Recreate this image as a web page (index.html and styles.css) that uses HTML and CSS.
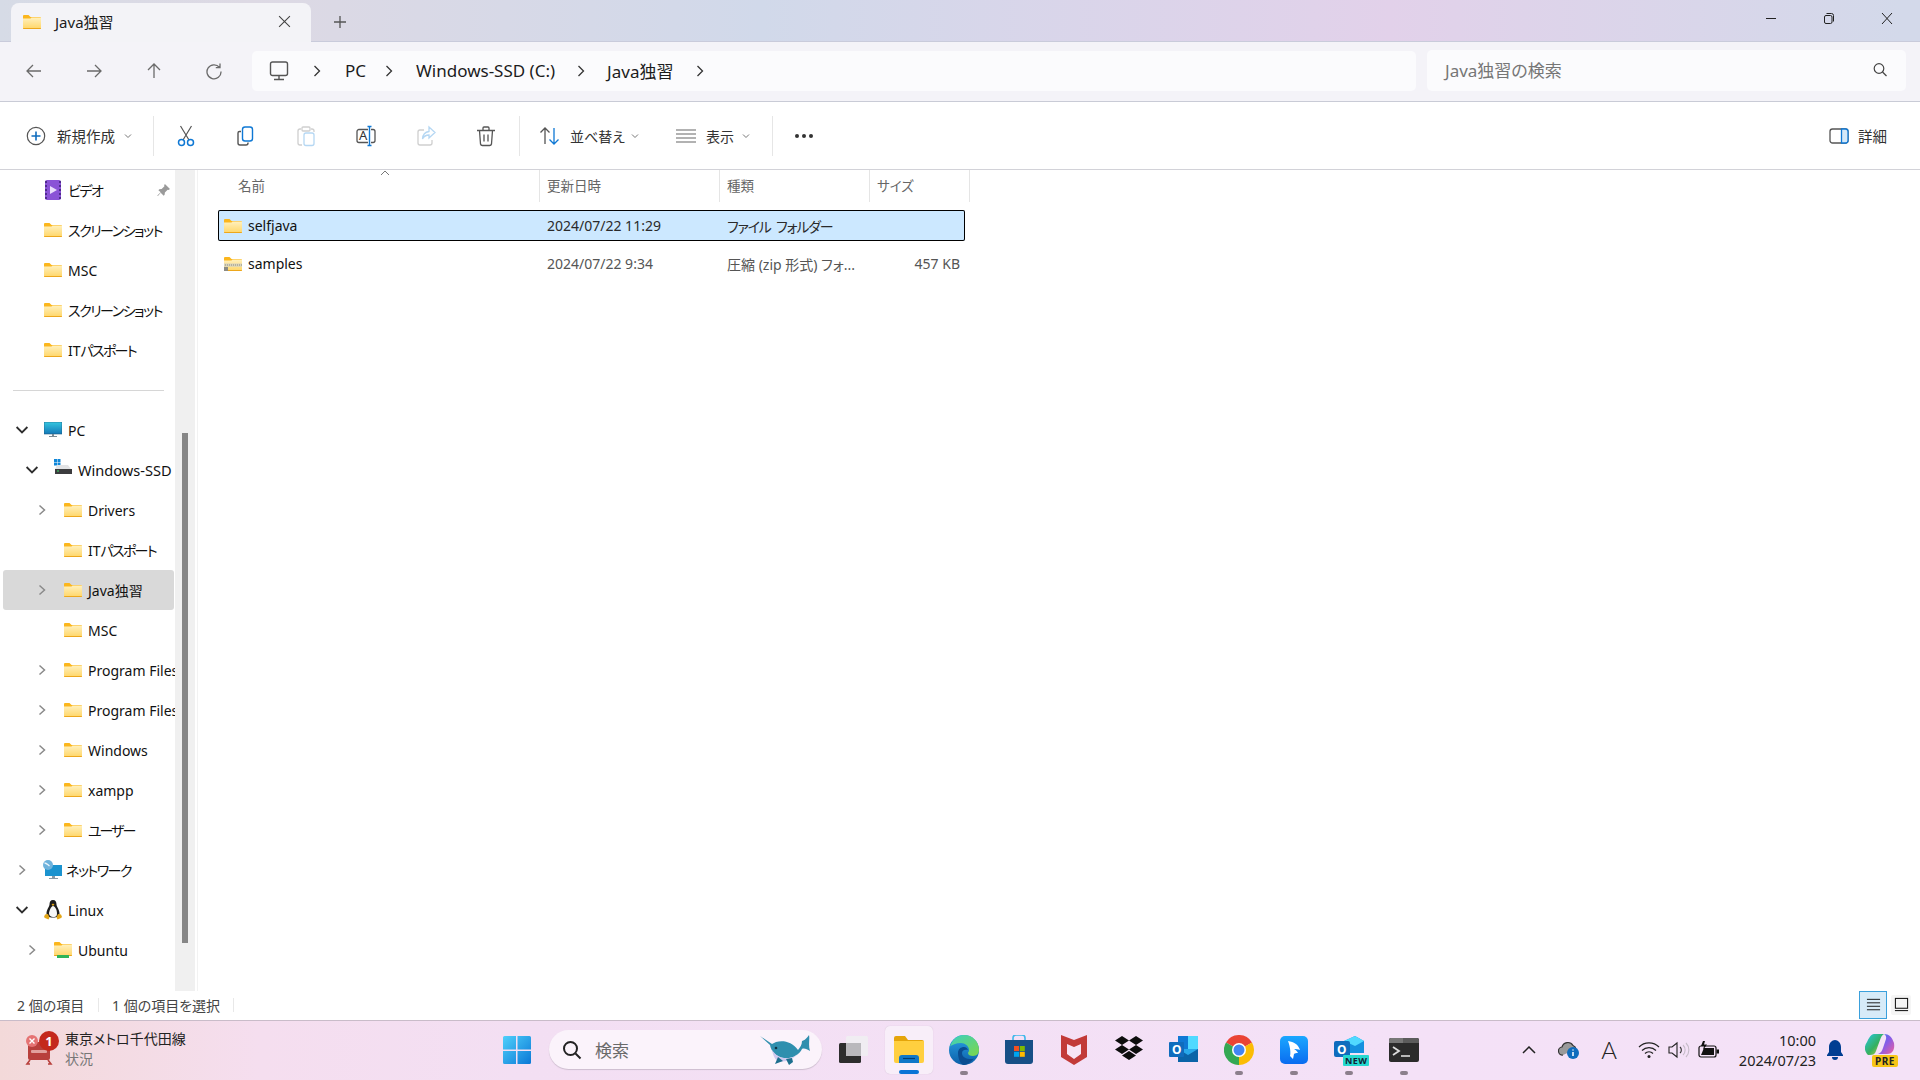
FILE: index.html
```html
<!DOCTYPE html>
<html lang="ja">
<head>
<meta charset="utf-8">
<title>Java独習</title>
<link rel="stylesheet" href="styles.css">
</head>
<body>
<svg class="defs" width="0" height="0" aria-hidden="true">
  <defs>
    <linearGradient id="fg" x1="0" y1="0" x2="0" y2="1"><stop offset="0" stop-color="#fff0bd"/><stop offset="1" stop-color="#ffd667"/></linearGradient>
    <symbol id="folder" viewBox="0 0 18 14">
      <path d="M0 1a1 1 0 0 1 1-1h4.500l2 2H17a1 1 0 0 1 1 1v2H0z" fill="#fbb61d"/>
      <path d="M0 3.600h7.500l1-1H18V13a1 1 0 0 1-1 1H1a1 1 0 0 1-1-1z" fill="url(#fg)"/>
      <path d="M0 13h18v.2a.8.8 0 0 1-.8.8H.8a.8.8 0 0 1-.8-.8z" fill="#eda71c"/>
    </symbol>
    <symbol id="chev-r" viewBox="0 0 10 12"><path d="M2.500 1.500 7.500 6l-5 4.500" fill="none" stroke="#8a8a8a" stroke-width="1.500"/></symbol>
    <symbol id="chev-d" viewBox="0 0 12 10"><path d="M1.500 2.500 6 7l4.500-4.500" fill="none" stroke="#2d2d2d" stroke-width="1.500"/></symbol>
    <symbol id="crumb" viewBox="0 0 10 14"><path d="M2.500 2 7.500 7l-5 5" fill="none" stroke="#333" stroke-width="1.300"/></symbol>
    <symbol id="caret" viewBox="0 0 8 6"><path d="M1 1.500 4 4.500l3-3" fill="none" stroke="#777" stroke-width="1"/></symbol>
  </defs>
</svg>

<div class="screen">
  <header class="titlebar">
    <div class="tab">
      <svg class="folder"><use href="#folder"/></svg>
      <span class="tab-label">Java独習</span>
      <svg class="tab-close" viewBox="0 0 12 12"><path d="M1 1l10 10M11 1 1 11" stroke="#444" stroke-width="1" fill="none"/></svg>
    </div>
    <svg class="tab-new" viewBox="0 0 14 14"><path d="M7 1v12M1 7h12" stroke="#555" stroke-width="1.300" fill="none"/></svg>
    <div class="winctl">
      <svg viewBox="0 0 12 12"><path d="M1 6h10" stroke="#222" stroke-width="1"/></svg>
      <svg viewBox="0 0 12 12"><rect x="1.500" y="3" width="7.500" height="8" rx="1.500" fill="none" stroke="#222"/><path d="M3.500 1h5a2 2 0 0 1 2 2v6" fill="none" stroke="#222"/></svg>
      <svg viewBox="0 0 12 12"><path d="M1 .5l10 11M11 .5 1 11.500" stroke="#222" stroke-width="1" fill="none"/></svg>
    </div>
  </header>

  <div class="addressrow">
    <span class="navbtn"><svg viewBox="0 0 18 18"><path d="M16 9H2M8 3 2 9l6 6" fill="none" stroke="#6a6a6a" stroke-width="1.300"/></svg></span>
    <span class="navbtn"><svg viewBox="0 0 18 18"><path d="M2 9h14M10 3l6 6-6 6" fill="none" stroke="#6a6a6a" stroke-width="1.300"/></svg></span>
    <span class="navbtn"><svg viewBox="0 0 18 18"><path d="M9 16V2M3 8l6-6 6 6" fill="none" stroke="#6a6a6a" stroke-width="1.300"/></svg></span>
    <span class="navbtn"><svg viewBox="0 0 18 18"><path d="M14.500 5.500A7 7 0 1 0 16 9.500M15 1.500v4.200h-4.200" fill="none" stroke="#6a6a6a" stroke-width="1.300"/></svg></span>
    <div class="addressbox">
      <svg class="pc" viewBox="0 0 20 20"><rect x="1.500" y="1" width="17" height="13.500" rx="2" fill="none" stroke="#555" stroke-width="1.400"/><path d="M10 14.500V18M5 18.500h10" stroke="#555" stroke-width="1.400"/></svg>
      <svg class="crumb c1"><use href="#crumb"/></svg>
      <span class="crumb-text">PC</span>
      <svg class="crumb c2"><use href="#crumb"/></svg>
      <span class="crumb-text">Windows-SSD (C:)</span>
      <svg class="crumb c3"><use href="#crumb"/></svg>
      <span class="crumb-text">Java独習</span>
      <svg class="crumb c4"><use href="#crumb"/></svg>
    </div>
    <div class="searchbox">
      <span>Java独習の検索</span>
      <svg viewBox="0 0 16 16"><circle cx="7" cy="6.500" r="4.800" fill="none" stroke="#444" stroke-width="1.200"/><path d="M10.500 10l4 4" stroke="#444" stroke-width="1.200"/></svg>
    </div>
  </div>

  <div class="toolbar">
    <div class="tb-new">
      <svg class="ic20" viewBox="0 0 20 20"><circle cx="10" cy="10" r="8.700" fill="none" stroke="#555" stroke-width="1.200"/><path d="M10 5.500v9M5.500 10h9" stroke="#0f6cbd" stroke-width="1.600"/></svg>
      <span class="tb-text">新規作成</span>
      <svg class="caret"><use href="#caret"/></svg>
    </div>
    <span class="tb-sep"></span>
    <span class="tb-cell"><svg class="ic22" viewBox="0 0 22 22"><path d="M5.500 1l8.500 14M16.500 1 8 15" stroke="#555" stroke-width="1.200" fill="none"/><circle cx="6.500" cy="17.500" r="3" fill="none" stroke="#0f78d4" stroke-width="1.500"/><circle cx="15.500" cy="17.500" r="3" fill="none" stroke="#0f78d4" stroke-width="1.500"/></svg></span>
    <span class="tb-cell"><svg class="ic22" viewBox="0 0 22 22"><path d="M6 6.500H4.500A1.500 1.500 0 0 0 3 8v10a2 2 0 0 0 2 2h6a2 2 0 0 0 2-2v-.5" fill="none" stroke="#555" stroke-width="1.400"/><rect x="7.500" y="2" width="10" height="14" rx="2.500" fill="none" stroke="#0f78d4" stroke-width="1.400"/></svg></span>
    <span class="tb-cell"><svg class="ic22" viewBox="0 0 22 22"><path d="M6 4H5a2 2 0 0 0-2 2v12a2 2 0 0 0 2 2h2M16 4h1a2 2 0 0 1 2 2v1" fill="none" stroke="#cfcfcf" stroke-width="1.300"/><rect x="7" y="2" width="8" height="4" rx="1" fill="none" stroke="#cfcfcf" stroke-width="1.300"/><rect x="9" y="8" width="10" height="12.500" rx="2" fill="none" stroke="#b5d7f3" stroke-width="1.300"/></svg></span>
    <span class="tb-cell"><svg class="ic22" viewBox="0 0 22 22"><path d="M13 4.500H4a2 2 0 0 0-2 2v9a2 2 0 0 0 2 2h9M16 4.500h2a2 2 0 0 1 2 2v9a2 2 0 0 1-2 2h-2" fill="none" stroke="#555" stroke-width="1.300"/><path d="M14.500 2v18M12.500 1.500h4M12.500 20.500h4" stroke="#0f78d4" stroke-width="1.400"/><text x="4" y="15" class="rename-a">A</text></svg></span>
    <span class="tb-cell"><svg class="ic22" viewBox="0 0 22 22"><path d="M9 5H5a2 2 0 0 0-2 2v11a2 2 0 0 0 2 2h10a2 2 0 0 0 2-2v-3" fill="none" stroke="#cfcfcf" stroke-width="1.300"/><path d="M14 2l6 5.500-6 5.500V10c-3 0-5 1-6.500 4 .3-4.500 2.500-7 6.500-7.500z" fill="none" stroke="#b5d7f3" stroke-width="1.300"/></svg></span>
    <span class="tb-cell"><svg class="ic22" viewBox="0 0 22 22"><path d="M2 5.500h18M8 5V3a1 1 0 0 1 1-1h4a1 1 0 0 1 1 1v2M4.500 5.500 5.500 19a2 2 0 0 0 2 1.500h7a2 2 0 0 0 2-1.500l1-13.500" fill="none" stroke="#555" stroke-width="1.300"/><path d="M9 9.500v7M13 9.500v7" stroke="#555" stroke-width="1.300"/></svg></span>
    <span class="tb-sep s2"></span>
    <div class="tb-sort">
      <svg class="ic22" viewBox="0 0 22 22"><path d="M6 19V3M1.500 7.500 6 3l4.500 4.500" fill="none" stroke="#555" stroke-width="1.300"/><path d="M15 3v16M10.500 14.500 15 19l4.500-4.500" fill="none" stroke="#0f78d4" stroke-width="1.300"/></svg>
      <span class="tb-text">並べ替え</span>
      <svg class="caret"><use href="#caret"/></svg>
    </div>
    <div class="tb-view">
      <svg class="ic20" viewBox="0 0 20 20"><path d="M0 4h20M0 8h20M0 12h20M0 16h20" stroke="#666" stroke-width="1.200"/></svg>
      <span class="tb-text">表示</span>
      <svg class="caret"><use href="#caret"/></svg>
    </div>
    <span class="tb-sep s3"></span>
    <span class="tb-more"><i></i><i></i><i></i></span>
    <div class="tb-detail">
      <svg class="ic20" viewBox="0 0 20 20"><rect x="1" y="3" width="18" height="14" rx="2.500" fill="none" stroke="#555" stroke-width="1.300"/><path d="M12.500 3h4a2.500 2.500 0 0 1 2.500 2.500v9a2.500 2.500 0 0 1-2.500 2.500h-4z" fill="#d4e8f8" stroke="#0f78d4" stroke-width="1.300"/></svg>
      <span>詳細</span>
    </div>
  </div>

  <main class="main">
    <nav class="sidebar">
      <div class="tree">
        <div class="row l0"><span class="chev"></span><svg class="ico-video" viewBox="0 0 18 20"><rect width="16" height="20" x="1" rx="2" fill="#8a52d6"/><path d="M1 2h2M1 6h2M1 10h2M1 14h2M1 18h2M15 2h2M15 6h2M15 10h2M15 14h2M15 18h2" stroke="#3d1f75" stroke-width="1.500"/><path d="M6 6l7 4-7 4z" fill="#e9dcfb"/></svg><span class="lbl kana">ビデオ</span><svg class="pin" viewBox="0 0 14 14"><path d="M8.500 0 14 5.500l-1.500 1-1-.3-3 3-.3 2.500-1 1L4 9.500 1 13l-.7-.5L4 9 1.500 6.700l1-1 2.500-.3 3-3-.3-1z" fill="#9a9a9a"/></svg></div>
        <div class="row l0"><span class="chev"></span><svg class="folder"><use href="#folder"/></svg><span class="lbl kana">スクリーンショット</span></div>
        <div class="row l0"><span class="chev"></span><svg class="folder"><use href="#folder"/></svg><span class="lbl">MSC</span></div>
        <div class="row l0"><span class="chev"></span><svg class="folder"><use href="#folder"/></svg><span class="lbl kana">スクリーンショット</span></div>
        <div class="row l0"><span class="chev"></span><svg class="folder"><use href="#folder"/></svg><span class="lbl">IT<span class="kana k-it">パスポート</span></span></div>
        <div class="divider"></div>
        <div class="row l0"><svg class="chev-d"><use href="#chev-d"/></svg><svg class="ico-pc" viewBox="0 0 18 16"><defs><linearGradient id="pcg" x1="0" y1="0" x2="0" y2="1"><stop offset="0" stop-color="#35c7e0"/><stop offset="1" stop-color="#1479b8"/></linearGradient></defs><rect width="18" height="12" fill="url(#pcg)" stroke="#1e5a80" stroke-width=".6"/><path d="M8 12h2v2h3v1H5v-1h3z" fill="#7a8a94"/></svg><span class="lbl">PC</span></div>
        <div class="row l1"><svg class="chev-d"><use href="#chev-d"/></svg><svg class="ico-drive" viewBox="0 0 18 16"><path d="M0 0h3v3H0zM3.500 0h3v3h-3zM0 3.500h3v3H0zM3.500 3.500h3v3h-3z" fill="#0f86d8"/><path d="M1 10 3 6h11l3 4z" fill="#e2e3e5"/><rect x="1" y="10" width="17" height="5" fill="#3c3c3e"/><path d="M3 12h2" stroke="#3ddc6a" stroke-width="1"/></svg><span class="lbl lbl-drive">Windows-SSD (C:)</span></div>
        <div class="row l2"><svg class="chev-r"><use href="#chev-r"/></svg><svg class="folder"><use href="#folder"/></svg><span class="lbl">Drivers</span></div>
        <div class="row l2"><span class="chev"></span><svg class="folder"><use href="#folder"/></svg><span class="lbl">IT<span class="kana k-it">パスポート</span></span></div>
        <div class="row l2 current"><svg class="chev-r"><use href="#chev-r"/></svg><svg class="folder"><use href="#folder"/></svg><span class="lbl">Java独習</span></div>
        <div class="row l2"><span class="chev"></span><svg class="folder"><use href="#folder"/></svg><span class="lbl">MSC</span></div>
        <div class="row l2"><svg class="chev-r"><use href="#chev-r"/></svg><svg class="folder"><use href="#folder"/></svg><span class="lbl">Program Files</span></div>
        <div class="row l2"><svg class="chev-r"><use href="#chev-r"/></svg><svg class="folder"><use href="#folder"/></svg><span class="lbl">Program Files (x86)</span></div>
        <div class="row l2"><svg class="chev-r"><use href="#chev-r"/></svg><svg class="folder"><use href="#folder"/></svg><span class="lbl">Windows</span></div>
        <div class="row l2"><svg class="chev-r"><use href="#chev-r"/></svg><svg class="folder"><use href="#folder"/></svg><span class="lbl">xampp</span></div>
        <div class="row l2"><svg class="chev-r"><use href="#chev-r"/></svg><svg class="folder"><use href="#folder"/></svg><span class="lbl kana k-wide">ユーザー</span></div>
        <div class="row l0"><svg class="chev-r"><use href="#chev-r"/></svg><svg class="ico-net" viewBox="0 0 20 20"><rect x="3" y="5" width="17" height="11" fill="#1b93cf"/><path d="M10 16h3v2h3v1H7v-1h3z" fill="#8a9aa5"/><circle cx="6" cy="5" r="5" fill="#6eb2dc"/><path d="M2.500 3c2 0 3 1.500 5 3" stroke="#e8f4fb" stroke-width="1.400" fill="none"/></svg><span class="lbl kana">ネットワーク</span></div>
        <div class="row l0"><svg class="chev-d"><use href="#chev-d"/></svg><svg class="ico-tux" viewBox="0 0 18 20"><path d="M9 0c2.500 0 3.500 2 3.500 4.500 0 2 3 5 3 9 0 2-2 4-6.500 4s-6.500-2-6.500-4c0-4 3-7 3-9C5.500 2 6.500 0 9 0z" fill="#1c1c1c"/><path d="M9 6c2 0 4 4 4 7.500S11 17 9 17s-4-1.500-4-3.500S7 6 9 6z" fill="#f7f7f7"/><path d="M1 14.500l3-.5 1.500 3.500-1 2-3.500-1.500L0 17zM17 14.500l-3-.5-1.500 3.500 1 2 3.500-1.500 1-1z" fill="#e3a617"/><path d="M7.500 4.500 9 3.500l1.500 1L9 6z" fill="#e3a617"/></svg><span class="lbl">Linux</span></div>
        <div class="row l1"><svg class="chev-r"><use href="#chev-r"/></svg><svg class="ico-ubuntu" viewBox="0 0 18 16"><use href="#folder" width="18" height="14"/><rect x="3" y="13" width="12" height="3" fill="#2fb457"/></svg><span class="lbl">Ubuntu</span></div>
      </div>
      <div class="scrolltrack"><div class="scrollthumb"></div></div>
    </nav>

    <section class="list">
      <div class="list-head">
        <span class="hd hd-name">名前<svg class="sort-arrow" viewBox="0 0 10 6"><path d="M1 5l4-4 4 4" fill="none" stroke="#777" stroke-width="1"/></svg></span>
        <span class="hd hd-date">更新日時</span>
        <span class="hd hd-type">種類</span>
        <span class="hd hd-size">サイズ</span>
      </div>
      <div class="file selected">
        <span class="f-name"><svg class="folder"><use href="#folder"/></svg>selfjava</span>
        <span class="f-date">2024/07/22 11:29</span>
        <span class="f-type f-kana">ファイル フォルダー</span>
        <span class="f-size"></span>
      </div>
      <div class="file">
        <span class="f-name"><svg class="folder" viewBox="0 0 18 14"><use href="#folder" width="18" height="14"/><rect x="0" y="6.500" width="18" height="3.200" fill="#d8d4bd"/><path d="M1 8h17" stroke="#8f8c7c" stroke-width="1" stroke-dasharray="1 1"/><rect x="0" y="10" width="4" height="4" fill="#8c8c84"/></svg>samples</span>
        <span class="f-date">2024/07/22 9:34</span>
        <span class="f-type">圧縮 (zip 形式) フォ...</span>
        <span class="f-size">457 KB</span>
      </div>
    </section>
  </main>

  <div class="statusbar">
    <span class="st st1">2 個の項目</span>
    <span class="st-sep"></span>
    <span class="st st2">1 個の項目を選択</span>
    <span class="st-sep"></span>
    <div class="viewbtns">
      <span class="vb vb-on"><svg viewBox="0 0 16 14"><path d="M1 1.500h14M1 5.200h14M1 8.900h14M1 12.600h14" stroke="#111" stroke-width="1"/></svg></span>
      <span class="vb"><svg viewBox="0 0 16 16"><rect x="1.500" y="1.500" width="13" height="10.500" fill="none" stroke="#111" stroke-width="1.100"/><path d="M1 14.500h14" stroke="#111" stroke-width="1.100"/></svg></span>
    </div>
  </div>

  <footer class="taskbar">
    <div class="widget">
      <span class="widget-ico">
        <svg viewBox="0 0 28 32"><path d="M5 8h18a2 2 0 0 1 2 2v14a2 2 0 0 1-2 2H5a2 2 0 0 1-2-2V10a2 2 0 0 1 2-2z" fill="#b8403c"/><rect x="6" y="16" width="16" height="3" rx="1" fill="#e2a09c"/><path d="M5 26 2 30h3M23 26l3 4h-3" stroke="#b8403c" stroke-width="1.600" fill="none"/><circle cx="7" cy="7" r="6" fill="#e57373"/><path d="M4.500 4.500l5 5M9.500 4.500l-5 5" stroke="#fff" stroke-width="1.400"/></svg>
        <span class="badge">1</span>
      </span>
      <div class="widget-text"><span class="w1">東京メトロ千代田線</span><span class="w2">状況</span></div>
    </div>
    <span class="slot"><svg class="ic30" viewBox="0 0 30 30"><defs><linearGradient id="win" x1="0" y1="0" x2="1" y2="1"><stop offset="0" stop-color="#4fd0fb"/><stop offset="1" stop-color="#0a78d6"/></linearGradient></defs><path d="M1 2.500A1.500 1.500 0 0 1 2.500 1H14v13.500H1zM15.500 1H27.500A1.500 1.500 0 0 1 29 2.500V14.500H15.500zM1 16h13v13H2.500A1.500 1.500 0 0 1 1 27.500zM15.500 16H29v11.500a1.500 1.500 0 0 1-1.500 1.500h-12z" fill="url(#win)"/></svg></span>
    <div class="tb-search">
      <svg class="ts-ico" viewBox="0 0 20 20"><circle cx="8.500" cy="8.500" r="6.500" fill="none" stroke="#222" stroke-width="2"/><path d="M13.500 13.500 18.500 18.500" stroke="#222" stroke-width="2"/></svg>
      <span class="ts-text">検索</span>
      <svg class="whale" viewBox="0 0 50 30"><path d="M0 1l12 8 4-2c8-2 16 0 22 8 2-3 4-5 4-9 2 0 6-4 7-6 1 4-1 10 1 16-3-2-6-3-8-2-3 6-10 10-18 9-8-1-13-7-14-13z" fill="#2f8fae"/><path d="M12 15c4 6 10 9 17 8 4-.5 7-2 9-5-4 6-12 10-20 8-3-1-5-6-6-11z" fill="#cfc8ee"/><path d="M18 22l-3 7 8-3zM26 24l3 6 4-3-1-4z" fill="#1c6f8e"/><circle cx="16" cy="13" r="1.300" fill="#0d3344"/></svg>
    </div>
    <span class="slot"><svg class="ic30" viewBox="0 0 30 30"><rect x="1" y="8" width="22" height="20" rx="1.500" fill="#2d2d2d"/><rect x="8" y="1" width="22" height="20" rx="1.500" fill="#f0eef2" opacity=".9"/><rect x="8" y="8" width="15" height="13" fill="#b9b8bc"/></svg></span>
    <span class="slot slot-active"><svg class="ic30x" viewBox="0 0 30 28"><path d="M0 2a2 2 0 0 1 2-2h9l3 4h14a2 2 0 0 1 2 2v4H0z" fill="#e5a50a"/><path d="M0 5h30v20a2 2 0 0 1-2 2H2a2 2 0 0 1-2-2z" fill="#ffcf3f"/><path d="M5 27v-5a3 3 0 0 1 3-3h14a3 3 0 0 1 3 3v5z" fill="#0f78c8"/><path d="M9 22.500h12" stroke="#003d73" stroke-width="1.200"/></svg><i class="ind ind-blue"></i></span>
    <span class="slot"><svg class="ic30" viewBox="0 0 30 30"><defs><linearGradient id="e1" x1="0" y1="0" x2="1" y2="1"><stop offset="0" stop-color="#3ad0c3"/><stop offset="1" stop-color="#7dd64a"/></linearGradient><linearGradient id="e2" x1="0" y1="0" x2="0" y2="1"><stop offset="0" stop-color="#2aa3e6"/><stop offset="1" stop-color="#0c5fa8"/></linearGradient></defs><circle cx="15" cy="15" r="15" fill="url(#e2)"/><path d="M1 12C3 4 9 0 15 0c8 0 15 6 15 15 0 3-2 6-6 6-3 0-5-1-5-3 0-1 1-1 1-3 0-4-4-7-8-7-5 0-9 2-12 4z" fill="url(#e1)"/><path d="M9 18c0-4 3-6 6-6 2 0 3 1 4 3-4-1-6 1-6 3 0 4 4 6 9 6 1 0 2 0 3-.5C22 27 18 30 15 30c-3 0-6-6-6-12z" fill="#0a4d91"/></svg><i class="ind"></i></span>
    <span class="slot"><svg class="ic30" viewBox="0 0 30 30"><path d="M9 5V3a3 3 0 0 1 3-3h6a3 3 0 0 1 3 3v2" fill="none" stroke="#3fb8ea" stroke-width="1.600"/><path d="M1 5h28v21a3 3 0 0 1-3 3H4a3 3 0 0 1-3-3z" fill="#174f86"/><rect x="10" y="11" width="5" height="5" fill="#f25022"/><rect x="15.800" y="11" width="5" height="5" fill="#7fba00"/><rect x="10" y="16.800" width="5" height="5" fill="#00a4ef"/><rect x="15.800" y="16.800" width="5" height="5" fill="#ffb900"/></svg></span>
    <span class="slot"><svg class="ic30" viewBox="0 0 28 30"><path d="M1 0l13 5 13-5v22L14 30 1 22z" fill="#c23a38"/><path d="M7 9l7 3 7-3v10l-7 5-7-5z" fill="#f7e3f4"/></svg></span>
    <span class="slot"><svg class="ic30" viewBox="0 0 30 28"><path d="M8 0l7 4.500L8 9 1 4.500zM22 0l7 4.500L22 9l-7-4.500zM8 9l7 4.500L8 18l-7-4.500zM22 9l7 4.500L22 18l-7-4.500zM15 15l7 4.500L15 24l-7-4.500z" fill="#0d0d0d"/></svg></span>
    <span class="slot"><svg class="ic30" viewBox="0 0 30 30"><rect x="9" y="1" width="20" height="26" rx="1" fill="#28a8ea"/><path d="M9 1h10v13H9z" fill="#0f78d4"/><path d="M19 1h10v13H19z" fill="#50d9ff"/><path d="M9 14l10 6 10-6v13H9z" fill="#0a64a8"/><rect x="0" y="7" width="15" height="15" rx="1" fill="#0f6cbd"/><text x="3" y="18.500" class="ol-o">O</text></svg></span>
    <span class="slot"><svg class="ic30" viewBox="0 0 30 30"><path d="M15 15 27.990 7.500A15 15 0 0 0 2 7.500z" fill="#ea4335"/><path d="M15 15 8 27.990 15 30A15 15 0 0 0 27.990 7.500z" fill="#fbbc04"/><path d="M15 15 2 7.500A15 15 0 0 0 15 30z" fill="#34a853"/><circle cx="15" cy="15" r="7" fill="#fff"/><circle cx="15" cy="15" r="5.500" fill="#4285f4"/></svg><i class="ind"></i></span>
    <span class="slot"><svg class="ic30" viewBox="0 0 30 30"><defs><linearGradient id="bl" x1="0" y1="0" x2="0" y2="1"><stop offset="0" stop-color="#1aa7ff"/><stop offset="1" stop-color="#0a6cf0"/></linearGradient></defs><rect x="1" y="1" width="28" height="28" rx="5" fill="url(#bl)"/><path d="M9 6c6 1 10 3 12 9-2-1-4-1-6-1 2 1 3 2 4 4-2 0-3 0-4 1l-1 5-3-3c1-3 0-10-2-15z" fill="#fff"/></svg><i class="ind"></i></span>
    <span class="slot slot-rel"><svg class="ic30" viewBox="0 0 30 30"><path d="M10 6l11-5 9 5v12H10z" fill="#1490df"/><path d="M21 1l9 5-9 5-11-5z" fill="#50d9ff"/><rect x="0" y="6" width="16" height="16" rx="2" fill="#0f6cbd"/><text x="3" y="19" class="ol-o">O</text></svg><span class="new-badge">NEW</span><i class="ind"></i></span>
    <span class="slot"><svg class="ic30" viewBox="0 0 30 24"><rect width="30" height="24" rx="2" fill="#2b2b2b"/><path d="M0 2a2 2 0 0 1 2-2h12v5H0z" fill="#777"/><path d="M14 0h14a2 2 0 0 1 2 2v3H14z" fill="#5c5c5c"/><path d="M4 9l6 4-6 4" fill="none" stroke="#ddd" stroke-width="1.800"/><path d="M12 18h9" stroke="#ddd" stroke-width="1.600"/></svg><i class="ind"></i></span>

    <div class="tray">
      <span class="t40"><svg class="i14" viewBox="0 0 14 8"><path d="M1 7l6-6 6 6" fill="none" stroke="#222" stroke-width="1.500"/></svg></span>
      <span class="t40"><svg class="i22" viewBox="0 0 22 20"><path d="M5 15a4 4 0 0 1-1-8 6 6 0 0 1 11-1.500A4.500 4.500 0 0 1 18 9" fill="#9a9a9a" stroke="#333" stroke-width="1.200"/><circle cx="15" cy="13" r="6" fill="#0f6cbd"/><path d="M15 12v4M15 9.500v1" stroke="#fff" stroke-width="1.500"/></svg></span>
      <span class="t40 ime">A</span>
      <span class="t40"><svg class="i22" viewBox="0 0 22 18"><path d="M1 6a14 14 0 0 1 20 0M4 9.500a10 10 0 0 1 14 0M7 12.500a5.500 5.500 0 0 1 8 0" fill="none" stroke="#222" stroke-width="1.200"/><circle cx="11" cy="15.500" r="1.500" fill="#222"/></svg></span>
      <span class="t20"><svg class="i22" viewBox="0 0 22 18"><path d="M1 6h3l5-4v14l-5-4H1z" fill="none" stroke="#222" stroke-width="1.100"/><path d="M12 6a4 4 0 0 1 0 6" fill="none" stroke="#333" stroke-width="1.100"/><path d="M15 4a7 7 0 0 1 0 10M18 2a10 10 0 0 1 0 14" fill="none" stroke="#c5bcc8" stroke-width="1.100"/></svg></span>
      <span class="t40"><svg class="i22" viewBox="0 0 22 18"><rect x="1" y="5" width="17" height="11" rx="2" fill="none" stroke="#111" stroke-width="1.200"/><path d="M3 14 6 7h10v7z" fill="#111"/><rect x="18.500" y="8.500" width="2.500" height="4" fill="#111"/><path d="M5 0 3 5h3L5 9l4-5.500H6L7 0z" fill="#111"/></svg></span>
      <div class="clock"><span>10:00</span><span>2024/07/23</span></div>
      <span class="t38"><svg class="i22" viewBox="0 0 18 20"><path d="M9 0c-3 0-6 3-6 7v5l-2 3v1h16v-1l-2-3V7c0-4-3-7-6-7z" fill="#003e92"/><path d="M6 17h6c0 2-1 3-3 3s-3-1-3-3z" fill="#003e92"/></svg></span>
      <span class="copilot">
        <svg viewBox="0 0 30 26"><defs><linearGradient id="cp1" x1="0" y1="0" x2="1" y2="1"><stop offset="0" stop-color="#27c7e6"/><stop offset=".55" stop-color="#35b060"/><stop offset="1" stop-color="#e5d23a"/></linearGradient><linearGradient id="cp2" x1="0" y1="0" x2="1" y2="1"><stop offset="0" stop-color="#2f7ff2"/><stop offset=".5" stop-color="#8a5ce6"/><stop offset="1" stop-color="#f0609a"/></linearGradient></defs><path d="M9 1h10c-2 1-3 3-4 6l-4 11c-1 3-3 4-6 4H3C-1 18-1 13 2 9 4 5 6 1 9 1z" fill="url(#cp1)"/><path d="M19 1c5 0 8 3 10 9 1 6-1 11-7 11H13c3-1 4-3 5-6l3-9c.5-2 0-4-2-5z" fill="url(#cp2)"/></svg>
        <span class="pre-badge">PRE</span>
      </span>
    </div>
  </footer>
</div>
</body>
</html>
```
FILE: styles.css
```css
* { box-sizing: border-box; }
html, body { margin: 0; padding: 0; }
body {
  font-family: "Noto Sans", "Noto Sans CJK JP", sans-serif;
  font-feature-settings: "palt";
  color: #1c1c1c;
  background: #fff;
}
.defs { display: block; height: 0; }
.screen { width: 1920px; height: 1080px; display: flex; flex-direction: column; overflow: hidden; }
svg { display: block; flex: none; }
.folder { width: 18px; height: 14px; }

/* title bar */
.titlebar {
  height: 42px; flex: none; display: flex; align-items: flex-end; padding-left: 11px;
  border-bottom: 1px solid #c9cbdb;
  background: linear-gradient(90deg, #d6dbe6 0, #ddd9e4 250px, #d1d9ea 760px, #e2d1ea 1390px, #d3d9ea 1900px);
}
.tab {
  width: 300px; height: 39px; margin-bottom: -1px; background: #f3f3f7; border-radius: 8px 8px 0 0;
  display: flex; align-items: center; padding: 0 0 2px 12px; font-size: 15px;
}
.tab-label { margin-left: 14px; width: 227px; white-space: nowrap; }
.tab-close { width: 13px; height: 13px; margin-left: -4px; }
.tab-new { width: 14px; height: 14px; margin: 0 0 12px 22px; }
.winctl { margin-left: auto; align-self: flex-start; display: flex; height: 36px; align-items: center; gap: 46px; padding-right: 27px; }
.winctl svg { width: 12px; height: 13px; }

/* address row */
.addressrow {
  height: 60px; flex: none; display: flex; align-items: center; padding: 0 14px 2px 4px;
  background: #f4f3f8; border-bottom: 1px solid #c9cbd6;
}
.navbtn { width: 60px; display: flex; justify-content: center; }
.navbtn svg { width: 18px; height: 18px; }
.addressbox {
  width: 1164px; height: 40px; margin-left: 8px; background: #fbfbfd; border-radius: 5px;
  display: flex; align-items: center; padding-left: 17px; font-size: 17px; color: #1c1c1c;
}
.pc { width: 20px; height: 20px; }
.crumb { width: 10px; height: 14px; }
.c1 { margin: 0 23px; }
.c2 { margin: 0 22px 0 18px; }
.c3 { margin: 0 21px 0 21px; }
.c4 { margin-left: 22px; }
.crumb-text { white-space: nowrap; }
.searchbox {
  width: 479px; height: 41px; margin-left: 11px; background: #fbfbfd; border-radius: 5px;
  display: flex; align-items: center; justify-content: space-between; padding: 0 18px 2px;
  font-size: 17px; color: #767676;
}
.searchbox svg { width: 16px; height: 16px; }

/* toolbar */
.toolbar {
  height: 68px; flex: none; display: flex; align-items: center; padding-left: 26px; background: #fff;
  border-bottom: 1px solid #d2d2d8;
}
.ic20 { width: 20px; height: 20px; }
.ic22 { width: 22px; height: 22px; }
.tb-text { font-size: 14px; color: #333; white-space: nowrap; }
.caret { width: 8px; height: 6px; }
.tb-new { width: 127px; display: flex; align-items: center; }
.tb-new .tb-text { margin-left: 11px; width: 67px; font-size: 14.500px; }
.tb-sep { width: 1px; height: 40px; background: #e6e6e6; flex: none; }
.tb-cell { width: 60px; flex: none; display: flex; justify-content: center; }
.tb-new + .tb-sep + .tb-cell { margin-left: 2px; }
.s2 { margin-left: 3px; }
.tb-sort { display: flex; align-items: center; margin-left: 19px; width: 126px; }
.tb-sort .tb-text { margin-left: 9px; width: 61px; }
.tb-view { display: flex; align-items: center; margin-left: 11px; width: 96px; }
.tb-view .tb-text { margin-left: 10px; width: 36px; }
.tb-more { display: flex; gap: 3px; margin-left: 22px; }
.tb-more i { width: 4px; height: 4px; border-radius: 50%; background: #333; }
.tb-detail { display: flex; align-items: center; margin-left: auto; padding-right: 33px; font-size: 14.500px; color: #333; gap: 9px; }
.rename-a { font-size: 13px; fill: #333; font-family: "Noto Sans", sans-serif; }

/* main */
.main { height: 821px; flex: none; display: flex; }
.sidebar { width: 195px; flex: none; display: flex; }
.tree { width: 175px; flex: none; overflow: hidden; font-size: 14px; }
.row { height: 40px; display: flex; align-items: center; white-space: nowrap; overflow: hidden; color: #111; }
.l0 { padding-left: 14px; }
.l1 { padding-left: 24px; }
.l2 { padding-left: 34px; }
.chev, .chev-d, .chev-r { width: 16px; height: 12px; margin-right: 14px; flex: none; }
.lbl { margin-left: 6px; }
.lbl-drive { font-size: 14.600px; }
.kana { letter-spacing: -1.500px; }
.k-wide { letter-spacing: -2px; }
.k-it { letter-spacing: -1.700px; }
.current { width: 171px; margin-left: 3px; padding-left: 31px; background: #d9d9d9; border-radius: 3px; }
.divider { height: 1px; margin: 20px 11px 19px 13px; background: #d6d6d6; }
.ico-video { width: 18px; height: 20px; }
.pin { width: 13px; height: 13px; margin-left: auto; margin-right: 5px; }
.ico-pc { width: 18px; height: 16px; }
.ico-drive { width: 18px; height: 16px; margin-top: -6px; }
.ico-net { width: 20px; height: 20px; margin-right: -2px; margin-left: -2px; }
.ico-tux { width: 18px; height: 20px; }
.ico-ubuntu { width: 18px; height: 16px; }
.scrolltrack { width: 20px; background: #f0f0f0; padding-left: 7px; flex: none; }
.scrollthumb { width: 6px; height: 510px; margin-top: 263px; background: #868686; }

/* list */
.list { flex: 1; margin-left: 2px; border-left: 1px solid #f2f2f2; position: relative; font-size: 14px; padding-left: 20px; }
.list-head { height: 32px; display: flex; color: #666; font-size: 13.500px; margin-bottom: 8px; }
.hd { display: flex; align-items: center; border-right: 1px solid #e5e5e5; padding-left: 7px; flex: none; padding-bottom: 2px; }
.hd-name { width: 322px; padding-left: 20px; }
.hd-date { width: 180px; }
.hd-type { width: 150px; padding-left: 7px; }
.hd-size { width: 100px; }
.sort-arrow { position: absolute; left: 182px; top: 0; width: 10px; height: 6px; }
.file { width: 747px; height: 31px; display: flex; align-items: center; margin-bottom: 7px; color: #555; border-radius: 2px; }
.file.selected { background: #cce8ff; box-shadow: inset 0 0 0 1px #000; color: #2a2a2a; }
.f-name { width: 322px; flex: none; display: flex; align-items: center; gap: 6px; padding-left: 6px; color: #111; }
.f-date { width: 180px; flex: none; padding-left: 7px; }
.f-type { width: 150px; flex: none; padding-left: 7px; white-space: nowrap; }
.f-kana { letter-spacing: -1.200px; word-spacing: 3px; }
.f-size { width: 90px; flex: none; text-align: right; }

/* status */
.statusbar { height: 29px; flex: none; display: flex; align-items: center; padding: 0 0 2px 17px; font-size: 14px; color: #444; }
.st { white-space: nowrap; }
.st1 { width: 81px; }
.st2 { width: 121px; margin-left: 13px; }
.st-sep { width: 1px; height: 14px; background: #e8e8e8; flex: none; }
.viewbtns { margin-left: auto; display: flex; align-items: center; gap: 4px; padding-right: 9px; }
.vb { width: 20px; height: 20px; display: flex; align-items: center; justify-content: center; background: #f5f5f5; border-radius: 2px; }
.vb svg { width: 15px; height: 15px; }
.vb-on { width: 28px; height: 28px; background: #d7ebf8; border: 1px solid #3aa0dc; border-radius: 0; }

/* taskbar */
.taskbar {
  height: 60px; flex: none; display: flex; align-items: center; border-top: 1px solid #c9bcc9; padding-bottom: 2px;
  background: linear-gradient(90deg, #f3d9d9 0, #f5deef 260px, #f3dff3 520px, #f4e1f7 1400px, #f4e2f7 1920px);
}
.widget { width: 489px; flex: none; display: flex; align-items: center; padding-left: 25px; }
.widget-ico { position: relative; width: 28px; height: 32px; flex: none; }
.widget-ico svg { width: 28px; height: 32px; }
.badge {
  position: absolute; left: 14px; top: -3px; width: 20px; height: 20px; border-radius: 50%;
  background: #c4281c; color: #fff; font-size: 13px; font-weight: 700; display: flex; align-items: center; justify-content: center;
}
.widget-text { display: flex; flex-direction: column; margin-left: 12px; line-height: 20px; font-size: 14px; margin-top: -1px; }
.w1 { color: #222; white-space: nowrap; }
.w2 { color: #777; }
.slot { width: 55.050px; height: 48px; flex: none; display: flex; align-items: center; justify-content: center; position: relative; }
.ic30 { width: 30px; height: 30px; }
.ic30x { width: 30px; height: 28px; }
.slot-active { background: #f8eef9; border-radius: 5px; width: 48px; margin: 0 3.500px 0 4px; box-shadow: 0 0 1px #cbb9cd; }
.ind { position: absolute; left: 50%; bottom: -1px; width: 8px; height: 4px; margin-left: -4px; border-radius: 2px; background: #8c7f8c; }
.ind-blue { width: 20px; margin-left: -10px; background: #0a74d6; bottom: 0; }
.tb-search {
  width: 273px; height: 39px; margin: 0 3.500px 0 5px; flex: none; display: flex; align-items: center; border-radius: 20px;
  background: #fbf3fb; box-shadow: 0 1px 1px #cdbdcf; padding-left: 13px; font-size: 17px; color: #6a6a6a;
}
.ts-ico { width: 20px; height: 20px; }
.ts-text { margin-left: 13px; }
.whale { width: 50px; height: 30px; margin-left: auto; margin-right: 12px; }
.ol-o { font-size: 12px; font-weight: 700; fill: #fff; font-family: "Noto Sans", sans-serif; }
.new-badge {
  position: absolute; right: 7px; bottom: 8px; padding: 0 2px; background: #26d9d0; color: #123; font-size: 9px; font-weight: 700;
  line-height: 11px; font-family: "Noto Sans", sans-serif; letter-spacing: .5px; border-radius: 1px;
}
.tray { margin-left: auto; display: flex; align-items: center; padding-right: 14px; }
.t40 { width: 40px; display: flex; justify-content: center; align-items: center; flex: none; }
.t20 { width: 20px; display: flex; justify-content: center; align-items: center; flex: none; }
.t38 { width: 38px; display: flex; justify-content: center; align-items: center; flex: none; }
.i14 { width: 14px; height: 8px; }
.i22 { width: 22px; height: 20px; }
.ime { font-family: "Lato", sans-serif; font-weight: 300; font-size: 24px; color: #222; }
.clock { width: 87px; display: flex; flex-direction: column; align-items: flex-end; font-size: 14.500px; line-height: 20px; color: #222; }
.copilot { position: relative; width: 52px; height: 34px; display: flex; justify-content: center; flex: none; }
.copilot svg { width: 30px; height: 26px; }
.pre-badge {
  position: absolute; left: 18px; bottom: 0; padding: 0 3px; background: #f7c516; color: #222; font-size: 10px; font-weight: 700;
  line-height: 12px; border-radius: 2px; font-family: "Noto Sans", sans-serif; letter-spacing: .5px;
}
```
